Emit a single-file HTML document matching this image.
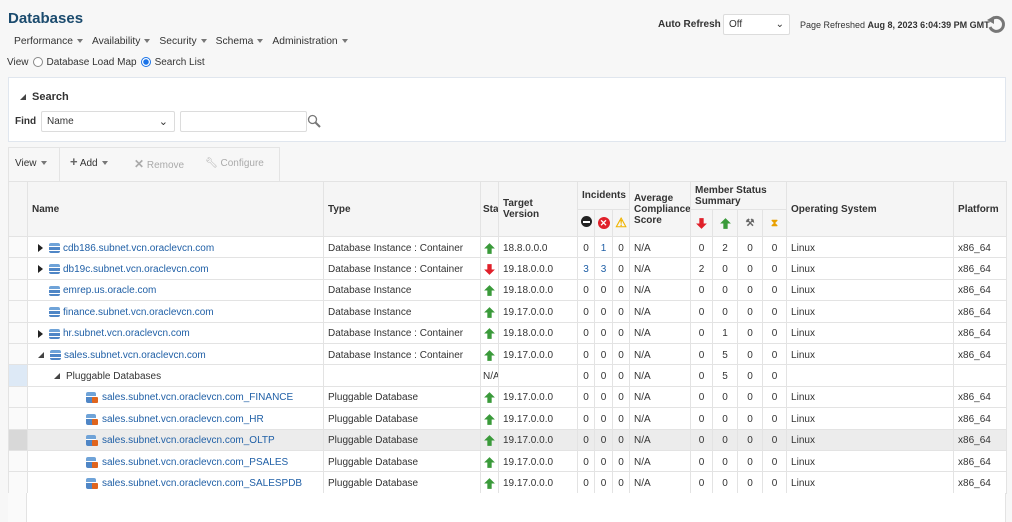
<!DOCTYPE html>
<html><head><meta charset="utf-8"><style>
*{box-sizing:border-box;margin:0;padding:0}
body{width:1012px;height:522px;overflow:hidden;background:#f7f7f7;font-family:"Liberation Sans",sans-serif;font-size:10px;color:#333;position:relative}
.a{position:absolute;white-space:nowrap}
h1{position:absolute;left:8px;top:10px;font-size:15px;color:#1b4b6e;font-weight:bold}
.menu span{margin-right:9px}
.dd{display:inline-block;width:0;height:0;border-left:3.5px solid transparent;border-right:3.5px solid transparent;border-top:4px solid #777;margin-left:4px;vertical-align:middle}
.sel{position:absolute;background:#fff;border:1px solid #dcdcdc;border-radius:2px;font-size:10px;padding:0 5px;line-height:20px}
.radio{display:inline-block;width:10px;height:10px;border:1px solid #888;border-radius:50%;vertical-align:middle;background:#fff;margin:0 4px}
.radio.on{border-color:#1a73e8;background:radial-gradient(circle,#1a73e8 2.5px,#fff 3px)}
table{position:absolute;left:8px;top:181px;width:998px;border-collapse:collapse;table-layout:fixed;background:#fff}
td,th{border:1px solid #e3e3e3;height:21.4px;padding:0 4px;white-space:nowrap;overflow:hidden;font-size:10px;vertical-align:middle}
td{padding-top:2px}
th{background:#f5f5f5;font-weight:bold;text-align:left;color:#333;height:auto;padding-top:0}
td.c{text-align:center;padding:2px 0 0}
td.s{background:#fafafa;padding:0}
a{color:#1f5fa6;text-decoration:none}
.db{display:inline-block;width:11px;height:10px;border-radius:2px;background:linear-gradient(#6fa3d8 0 30%,#fff 30% 40%,#4f86c6 40% 70%,#fff 70% 78%,#4f86c6 78%);vertical-align:middle;margin-right:3px}
.pdb{display:inline-block;width:13px;height:11px;position:relative;vertical-align:middle;margin-right:3px}
.pdb:before{content:"";position:absolute;left:0;top:0;width:10px;height:11px;border-radius:2px;background:linear-gradient(#6fa3d8 0 35%,#fff 35% 45%,#4f86c6 45%)}
.pdb:after{content:"";position:absolute;left:6px;top:5px;width:6px;height:6px;background:#e0651e;border-radius:1px}
.tri{display:inline-block;width:0;height:0;border-top:4px solid transparent;border-bottom:4px solid transparent;border-left:5px solid #222;vertical-align:middle;margin-right:6px}
.exp{display:inline-block;width:0;height:0;border-left:6px solid transparent;border-bottom:6px solid #444;vertical-align:middle;margin-right:6px}
.up,.dn{display:inline-block;width:13px;height:13px;vertical-align:middle}
.b{color:#1f5fa6}
</style></head><body>
<h1>Databases</h1>
<div class="a menu" style="left:14px;top:36px;font-size:10.3px"><span>Performance<i class="dd"></i></span><span>Availability<i class="dd"></i></span><span>Security<i class="dd"></i></span><span>Schema<i class="dd"></i></span><span>Administration<i class="dd"></i></span></div>
<div class="a" style="left:7px;top:57px">View<span class="radio"></span>Database Load Map<span class="radio on"></span>Search List</div>
<div class="a" style="left:658px;top:19px;font-weight:bold">Auto Refresh</div>
<div class="sel" style="left:723px;top:14px;width:67px;height:21px">Off<span style="position:absolute;right:5px;top:0;font-size:10px">⌄</span></div>
<div class="a" style="left:800px;top:20px;font-size:9px">Page Refreshed <b>Aug 8, 2023 6:04:39 PM GMT</b></div>
<svg class="a" style="left:986px;top:14px" width="20" height="20" viewBox="0 0 20 20"><path d="M5 6 A7 7 0 1 1 4 13" fill="none" stroke="#777" stroke-width="3"/><path d="M1 6 L8 2 L8 10Z" fill="#777"/></svg>
<div class="a" style="left:8px;top:77px;width:998px;height:65px;background:#fff;border:1px solid #e0e6ee"></div>
<div class="a" style="left:20px;top:91px;font-size:11px;font-weight:bold"><span class="exp" style="margin-right:6px"></span>Search</div>
<div class="a" style="left:15px;top:116px;font-weight:bold">Find</div>
<div class="sel" style="left:41px;top:111px;width:134px;height:21px">Name<span style="position:absolute;right:6px;top:0;font-size:11px">⌄</span></div>
<div class="sel" style="left:180px;top:111px;width:127px;height:21px"></div>
<svg class="a" style="left:307px;top:114px" width="14" height="14"><circle cx="5.5" cy="5.5" r="4" fill="none" stroke="#777" stroke-width="1.3"/><path d="M8.5 8.5L13 13" stroke="#777" stroke-width="2"/></svg>
<div class="a" style="left:8px;top:147px;width:272px;height:34px;border:1px solid #e4e4e4;border-bottom:none"></div>
<div class="a" style="left:59px;top:147px;width:1px;height:34px;background:#e4e4e4"></div>
<div class="a" style="left:15px;top:158px">View<i class="dd"></i></div>
<div class="a" style="left:70px;top:157px"><b style="color:#666;font-size:13px;line-height:10px">+</b> Add<i class="dd"></i></div>
<div class="a" style="left:134px;top:157px;color:#aaa"><b style="font-size:12px">✕</b> Remove</div>
<div class="a" style="left:205px;top:158px;color:#aaa">🔧︎ Configure</div>
<table>
<colgroup><col style="width:19px"><col style="width:296px"><col style="width:157px"><col style="width:18px"><col style="width:79px"><col style="width:17px"><col style="width:18px"><col style="width:17px"><col style="width:61px"><col style="width:22px"><col style="width:25px"><col style="width:25px"><col style="width:24px"><col style="width:167px"><col style="width:53px"></colgroup>
<tr style="height:28px"><th rowspan="2" style="background:#f5f5f5"></th><th rowspan="2">Name</th><th rowspan="2">Type</th><th rowspan="2" style="padding:0 2px">Sta</th><th rowspan="2">Target<br>Version</th><th colspan="3" style="text-align:center">Incidents</th><th rowspan="2" style="padding:0 4px">Average<br>Compliance<br>Score</th><th colspan="4">Member Status<br>Summary</th><th rowspan="2">Operating System</th><th rowspan="2">Platform</th></tr>
<tr style="height:27px"><th style="padding:0;text-align:center"><span style="display:inline-block;width:11px;height:11px;border-radius:50%;background:#222;position:relative"><i style="position:absolute;left:2px;top:4.5px;width:7px;height:2px;background:#fff"></i></span></th><th style="padding:0;text-align:center"><span style="display:inline-block;width:12px;height:12px;border-radius:50%;background:#e0202a;color:#fff;font-size:9px;line-height:12px;text-align:center">✕</span></th><th style="padding:0;text-align:center;color:#f0b400;font-size:13px">⚠</th>
<th style="padding:0;text-align:center"><svg class="dn" viewBox="0 0 12 12"><path d="M4 1h4v5h3L6 11 1 6h3z" fill="#e0202a"/></svg></th><th style="padding:0;text-align:center"><svg class="up" viewBox="0 0 12 12"><path d="M4 11h4V6h3L6 1 1 6h3z" fill="#3a9a3a"/></svg></th><th style="padding:0;text-align:center;color:#666">⚒</th><th style="padding:0;text-align:center;color:#e8a000">⧗</th></tr>
<tbody id="tb"></tbody>
</table>
<script>
var U='<svg class="up" viewBox="0 0 12 12"><path d="M4 11h4V6h3L6 1 1 6h3z" fill="#3a9a3a"/></svg>',D='<svg class="dn" viewBox="0 0 12 12"><path d="M4 1h4v5h3L6 11 1 6h3z" fill="#e0202a"/></svg>';
var C='Database Instance : Container',I='Database Instance',P='Pluggable Database',s='sales.subnet.vcn.oraclevcn.com_';
var r=[
['<span style="padding-left:6px"></span><span class="tri"></span><span class="db"></span><a>cdb186.subnet.vcn.oraclevcn.com</a>',C,U,'18.8.0.0.0',['0','<span class=b>1</span>','0'],['0','2','0','0'],1],
['<span style="padding-left:6px"></span><span class="tri"></span><span class="db"></span><a>db19c.subnet.vcn.oraclevcn.com</a>',C,D,'19.18.0.0.0',['<span class=b>3</span>','<span class=b>3</span>','0'],['2','0','0','0'],1],
['<span style="padding-left:17px"></span><span class="db"></span><a>emrep.us.oracle.com</a>',I,U,'19.18.0.0.0',['0','0','0'],['0','0','0','0'],1],
['<span style="padding-left:17px"></span><span class="db"></span><a>finance.subnet.vcn.oraclevcn.com</a>',I,U,'19.17.0.0.0',['0','0','0'],['0','0','0','0'],1],
['<span style="padding-left:6px"></span><span class="tri"></span><span class="db"></span><a>hr.subnet.vcn.oraclevcn.com</a>',C,U,'19.18.0.0.0',['0','0','0'],['0','1','0','0'],1],
['<span style="padding-left:6px"></span><span class="exp"></span><span class="db"></span><a>sales.subnet.vcn.oraclevcn.com</a>',C,U,'19.17.0.0.0',['0','0','0'],['0','5','0','0'],1],
['<span style="padding-left:22px"></span><span class="exp"></span>Pluggable Databases','','<span style="font-size:10px">N/A</span>','',['0','0','0'],['0','5','0','0'],0,'#dde9f6'],
];
['FINANCE','HR','OLTP','PSALES','SALESPDB'].forEach(function(n){r.push(['<span style="padding-left:54px"></span><span class="pdb"></span><a>'+s+n+'</a>',P,U,'19.17.0.0.0',['0','0','0'],['0','0','0','0'],1,n=='OLTP'?'#d8d8d8':'',n=='OLTP'?'#ececec':''])});
var h='';r.forEach(function(x){h+='<tr'+(x[8]?' style="background:'+x[8]+'"':'')+'><td class="s"'+(x[7]?' style="background:'+x[7]+'"':'')+'></td><td>'+x[0]+'</td><td>'+x[1]+'</td><td class="c" style="text-align:left;padding-left:2px">'+x[2]+'</td><td>'+x[3]+'</td>';
x[4].forEach(function(v){h+='<td class="c">'+v+'</td>'});h+='<td>N/A</td>';x[5].forEach(function(v){h+='<td class="c">'+v+'</td>'});
h+='<td>'+(x[6]?'Linux':'')+'</td><td>'+(x[6]?'x86_64':'')+'</td></tr>'});
document.getElementById('tb').innerHTML=h;
</script>
<div class="a" style="left:8px;top:493px;width:998px;height:29px;background:#fff;border-left:1px solid #e3e3e3;border-right:1px solid #e3e3e3"></div>
<div class="a" style="left:8px;top:493px;width:19px;height:29px;background:#fafafa;border-right:1px solid #e3e3e3"></div>
</body></html>
